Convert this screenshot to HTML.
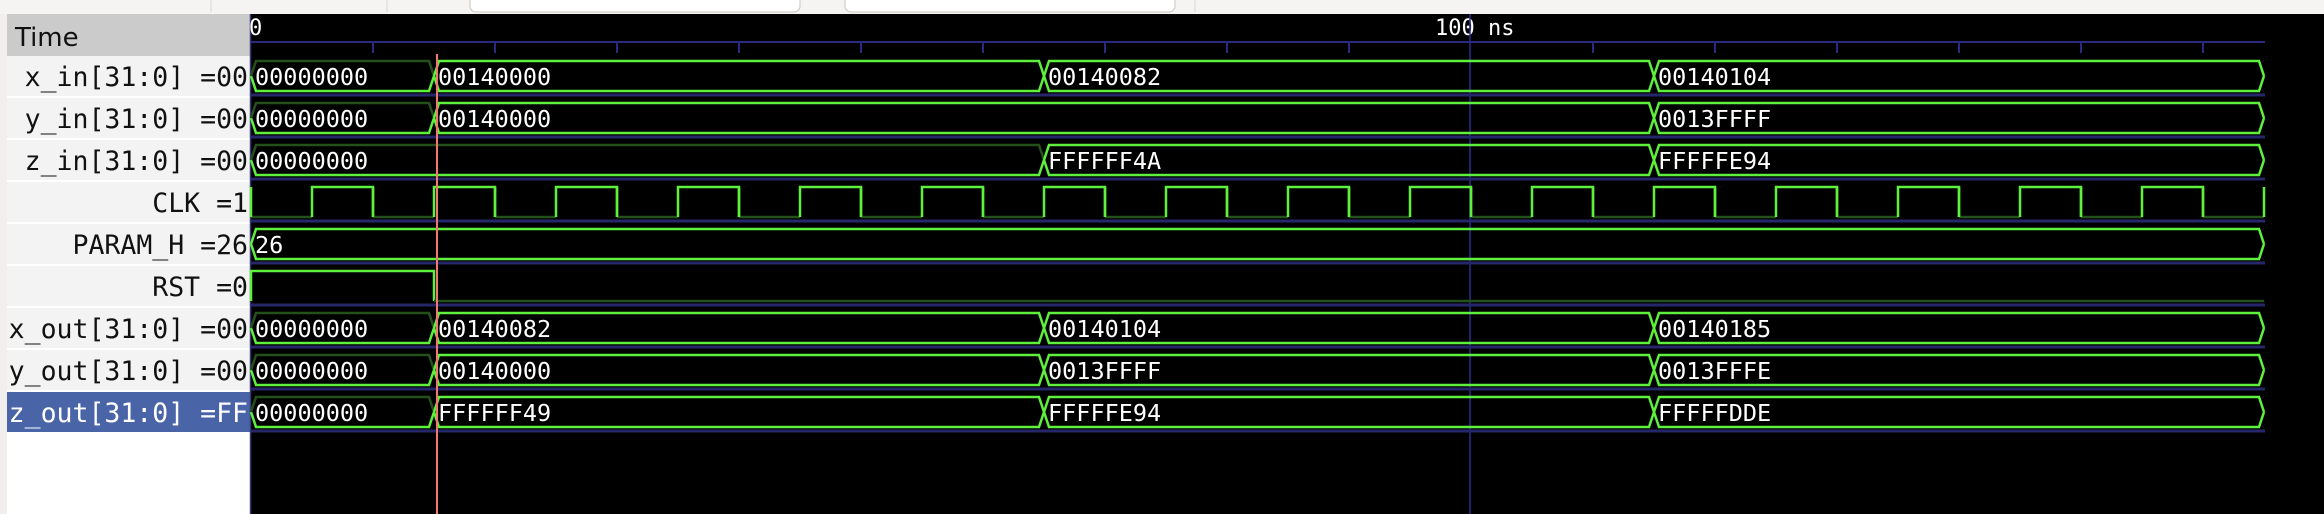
<!DOCTYPE html>
<html><head><meta charset="utf-8"><style>
html,body{margin:0;padding:0;background:#f5f4f2;width:2324px;height:514px;overflow:hidden}
svg{display:block}
</style></head><body>
<svg width="2324" height="514" xmlns="http://www.w3.org/2000/svg">
<rect x="0" y="0" width="2324" height="14" fill="#f5f4f2"/>
<line x1="211" y1="0" x2="211" y2="12" stroke="#d8d6d2" stroke-width="1"/>
<line x1="387" y1="0" x2="387" y2="12" stroke="#d8d6d2" stroke-width="1"/>
<line x1="1195" y1="0" x2="1195" y2="12" stroke="#d8d6d2" stroke-width="1"/>
<rect x="470" y="-10" width="330" height="22" rx="6" fill="#fff" stroke="#c8c6c2"/>
<rect x="845" y="-10" width="330" height="22" rx="6" fill="#fff" stroke="#c8c6c2"/>
<!-- left panel -->
<rect x="0" y="14" width="7" height="500" fill="#f0efed"/>
<rect x="7" y="14" width="243" height="500" fill="#ffffff"/>
<rect x="7" y="14" width="243" height="42" fill="#cbcbcb"/>
<text x="15" y="46" font-family="DejaVu Sans, sans-serif" font-size="26" fill="#111">Time</text>
<g font-family="DejaVu Sans Mono, monospace" font-size="26.5" fill="#111" text-anchor="end">
<rect x="7" y="56" width="243" height="40" fill="#f3f3f3"/>
<rect x="7" y="98" width="243" height="40" fill="#f3f3f3"/>
<rect x="7" y="140" width="243" height="40" fill="#f3f3f3"/>
<rect x="7" y="182" width="243" height="40" fill="#f3f3f3"/>
<rect x="7" y="224" width="243" height="40" fill="#f3f3f3"/>
<rect x="7" y="266" width="243" height="40" fill="#f3f3f3"/>
<rect x="7" y="308" width="243" height="40" fill="#f3f3f3"/>
<rect x="7" y="350" width="243" height="40" fill="#f3f3f3"/>
<rect x="7" y="392" width="243" height="40" fill="#4a64a8"/>
<text x="248" y="86">x_in[31:0] =00</text>
<text x="248" y="128">y_in[31:0] =00</text>
<text x="248" y="170">z_in[31:0] =00</text>
<text x="248" y="212">CLK =1</text>
<text x="248" y="254">PARAM_H =26</text>
<text x="248" y="296">RST =0</text>
<text x="248" y="338">x_out[31:0] =00</text>
<text x="248" y="380">y_out[31:0] =00</text>
<text x="248" y="422" fill="#fff">z_out[31:0] =FF</text>
</g>
<!-- wave area -->
<rect x="250" y="14" width="2074" height="500" fill="#000"/>
<line x1="250.5" y1="14" x2="250.5" y2="514" stroke="#3a3a7a" stroke-width="1.5"/>
<g font-family="DejaVu Sans Mono, monospace" font-size="22" fill="#fff">
<text x="249" y="35">0</text>
<text x="1435" y="35">100 ns</text>
</g>
<line x1="251" y1="42" x2="2265" y2="42" stroke="#2a2a80" stroke-width="2"/>
<g stroke="#2a2a80" stroke-width="2">
<line x1="373" y1="42" x2="373" y2="53"/><line x1="495" y1="42" x2="495" y2="53"/>
<line x1="617" y1="42" x2="617" y2="53"/><line x1="739" y1="42" x2="739" y2="53"/>
<line x1="861" y1="42" x2="861" y2="53"/><line x1="983" y1="42" x2="983" y2="53"/>
<line x1="1105" y1="42" x2="1105" y2="53"/><line x1="1227" y1="42" x2="1227" y2="53"/>
<line x1="1349" y1="42" x2="1349" y2="53"/><line x1="1593" y1="42" x2="1593" y2="53"/>
<line x1="1715" y1="42" x2="1715" y2="53"/><line x1="1837" y1="42" x2="1837" y2="53"/>
<line x1="1959" y1="42" x2="1959" y2="53"/><line x1="2081" y1="42" x2="2081" y2="53"/>
<line x1="2203" y1="42" x2="2203" y2="53"/>
</g>
<line x1="1470" y1="14" x2="1470" y2="514" stroke="#2a2a90" stroke-width="1.5"/>
<!-- row separators -->
<g stroke="#26266a" stroke-width="3">
<line x1="251" y1="95" x2="2265" y2="95"/><line x1="251" y1="137" x2="2265" y2="137"/>
<line x1="251" y1="179" x2="2265" y2="179"/><line x1="251" y1="221" x2="2265" y2="221"/>
<line x1="251" y1="263" x2="2265" y2="263"/><line x1="251" y1="305" x2="2265" y2="305"/>
<line x1="251" y1="347" x2="2265" y2="347"/><line x1="251" y1="389" x2="2265" y2="389"/>
<line x1="251" y1="431" x2="2265" y2="431"/>
</g>
<g id="waves" fill="none" stroke-width="2.5"></g>
<g id="txt" font-family="DejaVu Sans Mono, monospace" font-size="23.5" fill="#fff"></g>
<line x1="437" y1="54" x2="437" y2="514" stroke="#f07a70" stroke-width="2"/>
<script>
var X=function(t){return 251+12.2*t};
var G="#5ef03c",D="#24501c";
var w=document.getElementById('waves'),tx=document.getElementById('txt');
function ln(pts,c){var p=document.createElementNS('http://www.w3.org/2000/svg','polyline');p.setAttribute('points',pts.map(function(a){return a.join(',')}).join(' '));p.setAttribute('stroke',c);w.appendChild(p);}
function bus(row,segs){var T=56+42*row,top=T+5,bot=T+35,mid=T+20;
 segs.forEach(function(s,i){var a=X(s[0]),b=X(s[1]);
  ln([[a,mid],[a+5,bot],[b-5,bot],[b,mid]],G);
  ln([[a,mid],[a+5,top],[b-5,top],[b,mid]],(i==0&&segs.length>1)?D:G);
  var t=document.createElementNS('http://www.w3.org/2000/svg','text');t.setAttribute('x',a+4);t.setAttribute('y',mid+9);t.textContent=s[2];tx.appendChild(t);});}
bus(0,[[0,15,'00000000'],[15,65,'00140000'],[65,115,'00140082'],[115,165,'00140104']]);
bus(1,[[0,15,'00000000'],[15,115,'00140000'],[115,165,'0013FFFF']]);
bus(2,[[0,65,'00000000'],[65,115,'FFFFFF4A'],[115,165,'FFFFFE94']]);
bus(4,[[0,165,'26']]);
bus(6,[[0,15,'00000000'],[15,65,'00140082'],[65,115,'00140104'],[115,165,'00140185']]);
bus(7,[[0,15,'00000000'],[15,65,'00140000'],[65,115,'0013FFFF'],[115,165,'0013FFFE']]);
bus(8,[[0,15,'00000000'],[15,65,'FFFFFF49'],[65,115,'FFFFFE94'],[115,165,'FFFFFDDE']]);
// CLK
var T=56+42*3,hi=T+5,lo=T+35;
for(var t=0;t<165;t+=10){
 ln([[X(t),lo],[X(t+5),lo]],D);
 ln([[X(t),hi],[X(t),lo]],G);
 if(t+5<165) ln([[X(t+5),lo],[X(t+5),hi],[X(t+10),hi],[X(t+10),lo]],G);
 else ln([[X(165),lo],[X(165),hi]],G);
}
// RST
T=56+42*5;hi=T+5;lo=T+35;
ln([[X(0),lo],[X(0),hi],[X(15),hi],[X(15),lo]],G);
ln([[X(15),lo],[X(165),lo]],D);
</script>
</svg>
</body></html>
